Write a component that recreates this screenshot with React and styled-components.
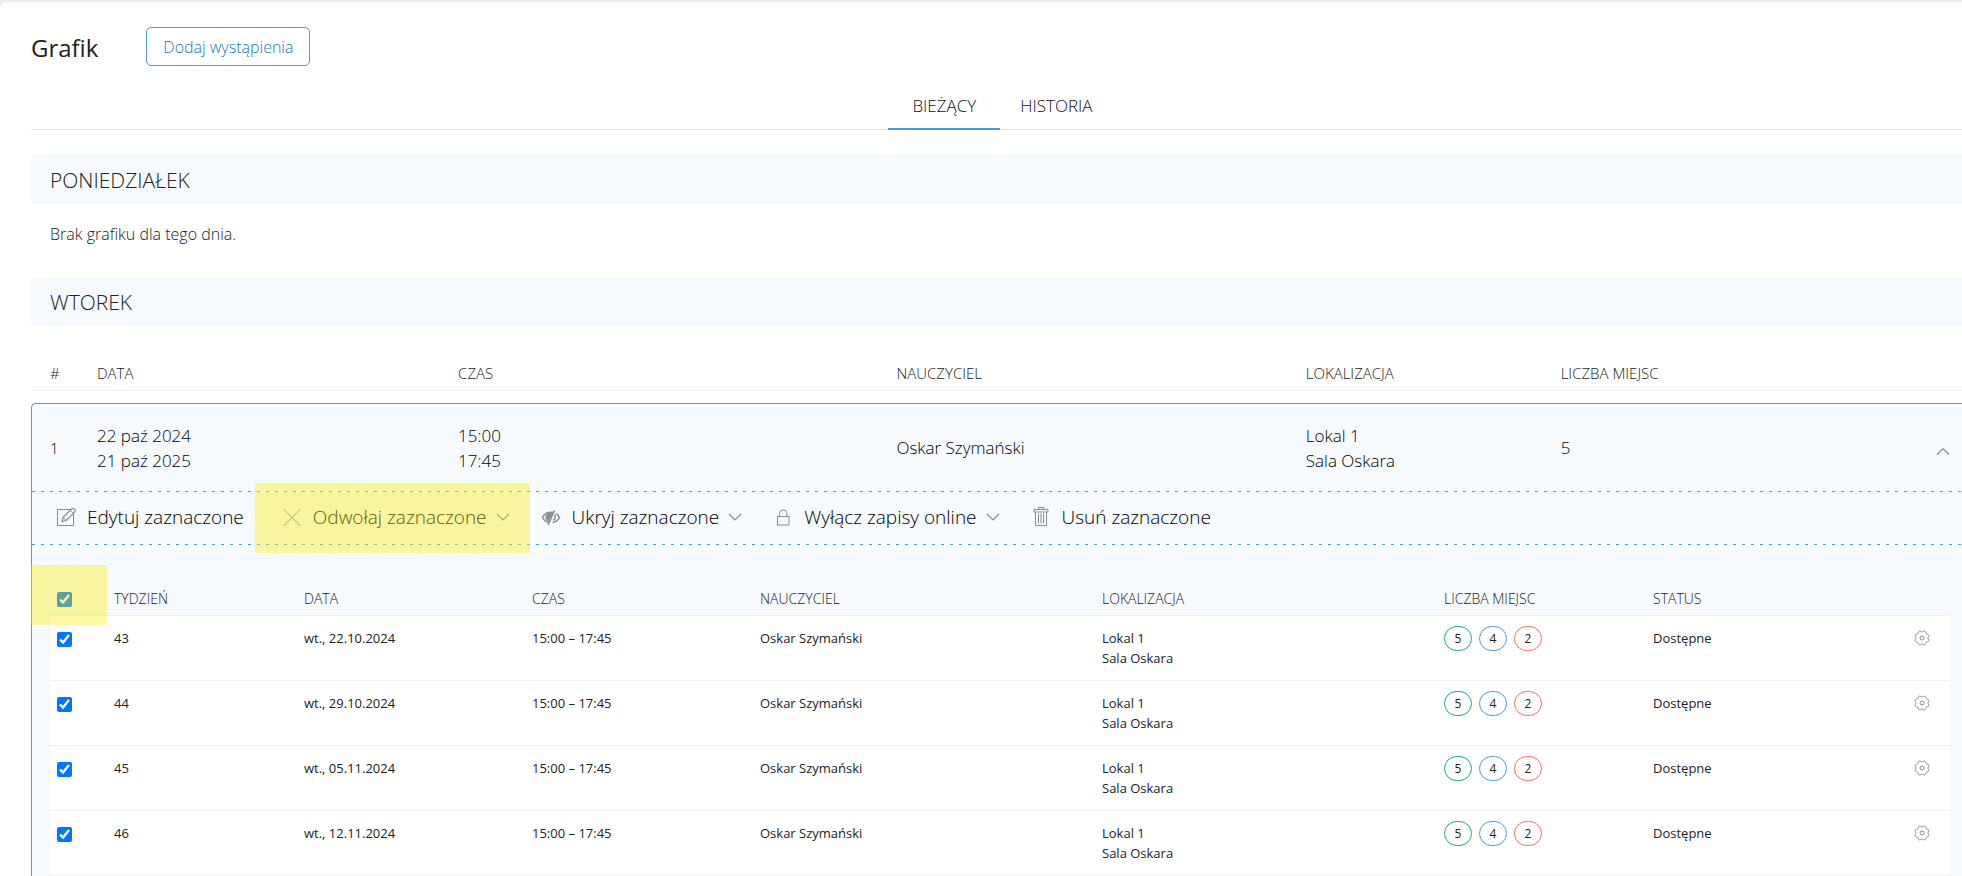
import React, { useState } from 'react';
import styled, { createGlobalStyle } from 'styled-components';

const Global = createGlobalStyle`
  *, *::before, *::after { box-sizing: border-box; }
  html, body { height: 100%; }
  body {
    margin: 0;
    overflow: hidden;
    background: #ececec;
    color: #222;
    font-family: "Open Sans", "Noto Sans", sans-serif;
    font-weight: 300;
    font-size: 16px;
  }
  button { font: inherit; color: inherit; background: none; border: 0; padding: 0; cursor: pointer; }
`;

const Panel = styled.main`
  min-height: 100vh;
  margin-top: 2px;
  padding-left: 31px;
  background: #fff;
  border-top-left-radius: 6px;
`;

const Header = styled.header`
  display: flex;
  align-items: center;
  gap: 48px;
  padding-top: 25px;
`;

const Title = styled.h1`
  margin: 3px 0 0;
  font-size: 24px;
  line-height: 32px;
  font-weight: 400;
`;

const AddButton = styled.button`
  height: 39px;
  padding: 0 16px;
  border: 1px solid #4b9cd9;
  border-radius: 5px;
  color: #2277c9;
  font-size: 16px;
`;

const Tabs = styled.nav`
  display: flex;
  justify-content: center;
  margin-top: 16px;
  padding-left: 12px;
  border-bottom: 1px solid #e0e2e3;
`;

const Tab = styled.a`
  height: 48px;
  margin-bottom: -1px;
  padding: 0 24px;
  border-bottom: 2px solid ${(p) => (p.$active ? '#4b9cd9' : 'transparent')};
  color: #111;
  font-size: 17px;
  line-height: 48px;
  text-decoration: none;

  & + & { padding-left: 20px; }
`;

const Day = styled.section`
  margin-top: ${(p) => p.$top}px;
`;

const DayTitle = styled.h2`
  margin: 0;
  padding: 1px 0 0 19px;
  background: #f6fafd;
  font-size: 21px;
  line-height: 48px;
  font-weight: 300;
`;

const Empty = styled.p`
  margin: 18px 0 0;
  padding-left: 19px;
  font-size: 16px;
  line-height: 24px;
`;

const Schedule = styled.table`
  width: 100%;
  margin-top: 30px;
  table-layout: fixed;
  border-spacing: 0;

  & > thead > tr > th {
    height: 35px;
    padding: 7px 0 0;
    border-bottom: 1px solid #eff1f2;
    font-size: 15px;
    font-weight: 300;
    line-height: 20px;
    text-align: left;
    vertical-align: top;
  }
  & > thead > tr > th:first-child { padding-left: 19px; }
  & > tbody::before { content: ''; display: block; height: 12px; }
`;

const Col = styled.col`
  width: ${(p) => p.$width};
`;

const SummaryCell = styled.td`
  height: 88px;
  padding: 0;
  border-top: 1px solid #4b9cd9;
  background: #f6fafd;
  color: #000;
  font-size: 17px;
  line-height: 25px;
`;

const IndexCell = styled(SummaryCell)`
  padding: 2px 0 0 18px;
  border-left: 1px solid #4b9cd9;
  border-top-left-radius: 5px;
  font-size: 15px;
`;

const Seats = styled.div`
  display: flex;
  align-items: center;
  justify-content: space-between;
  padding-right: 12px;
`;

const ToggleButton = styled.button`
  padding-top: 6px;
`;

const DetailCell = styled.td`
  padding: 0;
  border-left: 1px solid #4b9cd9;
  background: #f6fafd;
`;

const dashes = 'repeating-linear-gradient(90deg, #4b9cd9 0 3px, transparent 3px 9px)';

const Actions = styled.div`
  display: flex;
  gap: 29px;
  height: 54px;
  padding-left: 22px;
  background: ${dashes} top / 100% 1px no-repeat, ${dashes} bottom / 100% 1px no-repeat;
`;

const ActionButton = styled.button`
  position: relative;
  display: flex;
  align-items: center;
  gap: 9px;
  padding-bottom: 2px;
  margin-right: ${(p) => (p.$menu ? 0 : 7)}px;
  color: #000;
  font-size: 19px;
`;

const Highlight = styled.span`
  position: absolute;
  inset: ${(p) => p.$inset};
  background: rgba(255, 232, 0, 0.37);
  pointer-events: none;
`;

const Icon = styled.svg`
  display: block;
  flex: none;
  fill: none;
  stroke: #8a8c8f;
  stroke-width: 1;
`;

const SessionsWrap = styled.div`
  padding: 35px 12px 0 18px;
`;

const Sessions = styled.table`
  width: 100%;
  table-layout: fixed;
  border-spacing: 0;
  line-height: 20px;

  th, td {
    padding: 0 7px;
    text-align: left;
    vertical-align: top;
  }
  th {
    height: 36px;
    padding-top: 9px;
    border-bottom: 1px solid #eaf0f3;
    font-size: 14px;
    font-weight: 300;
  }
  td {
    height: 65px;
    padding-top: 12px;
    border-bottom: 1px solid #f0f2f3;
    background: #fff;
    font-size: 13px;
    font-weight: 400;
  }
`;

const SelectAllCell = styled.th`
  position: relative;
`;

const Checkbox = styled.input`
  display: block;
  width: 15px;
  height: 15px;
  margin: ${(p) => p.$top}px 0 0;
  accent-color: #0075ff;
`;

const Badges = styled.div`
  display: flex;
  gap: 7px;
  margin-top: -2px;
`;

const Badge = styled.span`
  width: 28px;
  height: 25px;
  border: 1px solid ${(p) => p.$color};
  border-radius: 13px;
  font-size: 12px;
  line-height: 23px;
  text-align: center;
`;

const Status = styled.div`
  display: flex;
  align-items: center;
  justify-content: space-between;
  padding-right: 13px;
`;

const icons = {
  edit: (
    <>
      <path d="M16 4.500H3.500v16h16V9" />
      <path d="M8 16.500l1.200-4.200 8.300-8.300c1.800-1.500 4.800 1.200 3.200 3.200l-8.500 8.300z" strokeWidth="1.200" />
      <path d="M9.200 12.300l3 3.200M16.300 5.200l3.200 3.200" />
    </>
  ),
  cancel: <path d="M3.500 4l17 17M20.500 4l-17 17" />,
  hide: (
    <>
      <path d="M3.500 12.500c3.500-7 13.500-7 17 0c-3.500 7-13.500 7-17 0z" strokeWidth="1.600" />
      <path d="M13.500 8.500a4 4 0 0 0-4.500 7.500z" fill="#8a8c8f" />
      <path d="M16.800 5.500L11 20" stroke="#f6fafd" strokeWidth="3" />
      <path d="M15.500 5.500L9 20" strokeWidth="1.600" />
      <path d="M15.500 9.500c1.200 2 .6 4.500-1.500 6" strokeWidth="1.400" />
    </>
  ),
  lock: (
    <>
      <rect x="6.500" y="11.500" width="11.500" height="8.500" />
      <path d="M8.500 11.500V8.500a3.700 3.700 0 0 1 7.400 0v3" />
    </>
  ),
  trash: (
    <>
      <path d="M6.500 7v13.500h11V7M5 4.500h14V7H5zM9.500 4.500v-2h5v2" />
      <path d="M9.500 8.500v10M12 8.500v10M14.500 8.500v10" />
    </>
  ),
};

const ActionIcon = ({ name }) => (
  <Icon width="24" height="24" viewBox="0 0 24 24" aria-hidden="true">{icons[name]}</Icon>
);

const Chevron = ({ up }) => (
  <Icon width="14" height="8" viewBox="0 0 14 8" aria-hidden="true">
    <path d={up ? 'M1 7.500l6-6 6 6' : 'M1 1l6 6 6-6'} strokeWidth="1.200" />
  </Icon>
);

// Outline of an eight-toothed wheel, sampled around the circle.
const gearPath = `M${Array.from({ length: 64 }, (_, i) => {
  const angle = (i / 64) * Math.PI * 2;
  const radius = 6.7 + 0.7 * Math.cos(8 * angle + Math.PI);
  return `${(8 + radius * Math.cos(angle)).toFixed(2)} ${(8 + radius * Math.sin(angle)).toFixed(2)}`;
}).join('L')}Z`;

const Gear = () => (
  <Icon width="16" height="16" viewBox="0 0 16 16" aria-hidden="true">
    <path d={gearPath} />
    <circle cx="8" cy="8" r="2" />
  </Icon>
);

const actions = [
  { icon: 'edit', label: 'Edytuj zaznaczone' },
  { icon: 'cancel', label: 'Odwołaj zaznaczone', menu: true, highlighted: true },
  { icon: 'hide', label: 'Ukryj zaznaczone', menu: true },
  { icon: 'lock', label: 'Wyłącz zapisy online', menu: true },
  { icon: 'trash', label: 'Usuń zaznaczone' },
];

const sessions = [
  { week: 43, date: 'wt., 22.10.2024' },
  { week: 44, date: 'wt., 29.10.2024' },
  { week: 45, date: 'wt., 05.11.2024' },
  { week: 46, date: 'wt., 12.11.2024' },
];

const scheduleCols = ['66px', '18.7%', '22.7%', '21.2%', '13.2%', 'auto'];
const sessionCols = ['3%', '10%', '12%', '12%', '18%', '18%', '11%', '16%'];

const Cols = ({ widths }) => (
  <colgroup>{widths.map((w, i) => <Col key={i} $width={w} />)}</colgroup>
);

export default function App() {
  const [selected, setSelected] = useState(sessions.map((s) => s.week));
  const all = selected.length === sessions.length;
  const toggle = (week) =>
    setSelected((s) => (s.includes(week) ? s.filter((w) => w !== week) : [...s, week]));

  return (
    <>
      <Global />
      <Panel>
        <Header>
          <Title>Grafik</Title>
          <AddButton type="button">Dodaj wystąpienia</AddButton>
        </Header>
        <Tabs>
          <Tab href="#current" $active>BIEŻĄCY</Tab>
          <Tab href="#history">HISTORIA</Tab>
        </Tabs>

        <Day $top={25}>
          <DayTitle>PONIEDZIAŁEK</DayTitle>
          <Empty>Brak grafiku dla tego dnia.</Empty>
        </Day>

        <Day $top={31}>
          <DayTitle>WTOREK</DayTitle>
          <Schedule>
            <Cols widths={scheduleCols} />
            <thead>
              <tr>
                <th>#</th>
                <th>DATA</th>
                <th>CZAS</th>
                <th>NAUCZYCIEL</th>
                <th>LOKALIZACJA</th>
                <th>LICZBA MIEJSC</th>
              </tr>
            </thead>
            <tbody>
              <tr>
                <IndexCell>1</IndexCell>
                <SummaryCell>22 paź 2024<br />21 paź 2025</SummaryCell>
                <SummaryCell>15:00<br />17:45</SummaryCell>
                <SummaryCell>Oskar Szymański</SummaryCell>
                <SummaryCell>Lokal 1<br />Sala Oskara</SummaryCell>
                <SummaryCell>
                  <Seats>
                    5
                    <ToggleButton type="button" aria-label="Zwiń"><Chevron up /></ToggleButton>
                  </Seats>
                </SummaryCell>
              </tr>
              <tr>
                <DetailCell colSpan={6}>
                  <Actions>
                    {actions.map((a) => (
                      <ActionButton key={a.icon} type="button" $menu={a.menu}>
                        <ActionIcon name={a.icon} />
                        {a.label}
                        {a.menu && <Chevron />}
                        {a.highlighted && <Highlight $inset="-8px -20px -8px -25px" />}
                      </ActionButton>
                    ))}
                  </Actions>
                  <SessionsWrap>
                    <Sessions>
                      <Cols widths={sessionCols} />
                      <thead>
                        <tr>
                          <SelectAllCell>
                            <Checkbox
                              type="checkbox"
                              aria-label="Zaznacz wszystkie"
                              $top={3}
                              checked={all}
                              onChange={() => setSelected(all ? [] : sessions.map((s) => s.week))}
                            />
                            <Highlight $inset="-15px 0 -10px -19px" />
                          </SelectAllCell>
                          <th>TYDZIEŃ</th>
                          <th>DATA</th>
                          <th>CZAS</th>
                          <th>NAUCZYCIEL</th>
                          <th>LOKALIZACJA</th>
                          <th>LICZBA MIEJSC</th>
                          <th>STATUS</th>
                        </tr>
                      </thead>
                      <tbody>
                        {sessions.map((s) => (
                          <tr key={s.week}>
                            <td>
                              <Checkbox
                                type="checkbox"
                                aria-label={`Tydzień ${s.week}`}
                                $top={4}
                                checked={selected.includes(s.week)}
                                onChange={() => toggle(s.week)}
                              />
                            </td>
                            <td>{s.week}</td>
                            <td>{s.date}</td>
                            <td>15:00 – 17:45</td>
                            <td>Oskar Szymański</td>
                            <td>Lokal 1<br />Sala Oskara</td>
                            <td>
                              <Badges>
                                <Badge $color="#1fa97c">5</Badge>
                                <Badge $color="#4b9cd9">4</Badge>
                                <Badge $color="#f96b6b">2</Badge>
                              </Badges>
                            </td>
                            <td>
                              <Status>
                                Dostępne
                                <button type="button" aria-label="Ustawienia"><Gear /></button>
                              </Status>
                            </td>
                          </tr>
                        ))}
                      </tbody>
                    </Sessions>
                  </SessionsWrap>
                </DetailCell>
              </tr>
            </tbody>
          </Schedule>
        </Day>
      </Panel>
    </>
  );
}
